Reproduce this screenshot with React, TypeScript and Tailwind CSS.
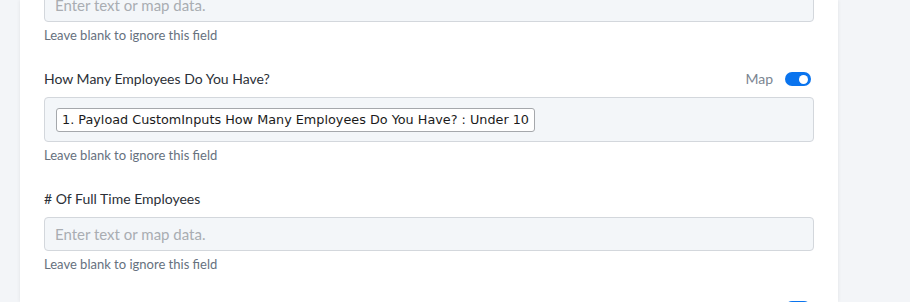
import React from 'react';

interface FieldProps {
  label?: string;
  chip?: string;
  showToggle?: boolean;
  hideLabel?: boolean;
  className?: string;
}

const Toggle: React.FC = () => (
  <div className="mr-[3px] flex items-center gap-3">
    <span className="text-[14px] leading-5 text-[#7b8691]">Map</span>
    <span className="relative flex h-[14px] w-[26px] items-center rounded-full bg-[#0a74ee]">
      <span className="absolute right-[3px] h-[9px] w-[9px] rounded-full bg-white" />
    </span>
  </div>
);

const Field: React.FC<FieldProps> = ({ label, chip, showToggle, hideLabel, className }) => (
  <div className={className}>
    {!hideLabel && (
      <div className="mb-2 flex h-5 items-center justify-between">
        <span className="text-[14px] leading-5 text-[#2b3037]">{label}</span>
        {showToggle && <Toggle />}
      </div>
    )}
    {chip ? (
      <div className="flex h-[45px] items-center rounded-[4px] border border-[#d3d7dc] bg-[#f3f6f9] px-[11px]">
        <span className="flex h-[24px] items-center rounded-[3px] border border-[#a5a8ac] bg-white px-[5px] font-['DejaVu_Sans',sans-serif] text-[12.8px] text-[#1b1b1b]">
          {chip}
        </span>
      </div>
    ) : (
      <div className="flex h-[34px] items-center rounded-[4px] border border-[#d3d7dc] bg-[#f3f6f9] px-[10px]">
        <span className="text-[15px] text-[#a9adb2]">Enter text or map data.</span>
      </div>
    )}
    <p className="mt-[4px] text-[13px] leading-[18px] text-[#66717e]">Leave blank to ignore this field</p>
  </div>
);

export default function App() {
  return (
    <div className="flex h-[302px] w-full overflow-hidden bg-[#f3f5f8] font-['Lato',sans-serif]">
      <div className="ml-5 w-[818px] shrink-0 bg-white px-6 shadow-[0_0_4px_rgba(0,0,0,0.08)]">
        <Field hideLabel className="-mt-[12px] mb-[25px]" />
        <Field
          label="How Many Employees Do You Have?"
          showToggle
          chip="1. Payload CustomInputs How Many Employees Do You Have? : Under 10"
          className="mb-[25px]"
        />
        <Field label="# Of Full Time Employees" className="mb-[25px]" />
        <Field label="Which Industry Are You In?" showToggle />
      </div>
    </div>
  );
}
